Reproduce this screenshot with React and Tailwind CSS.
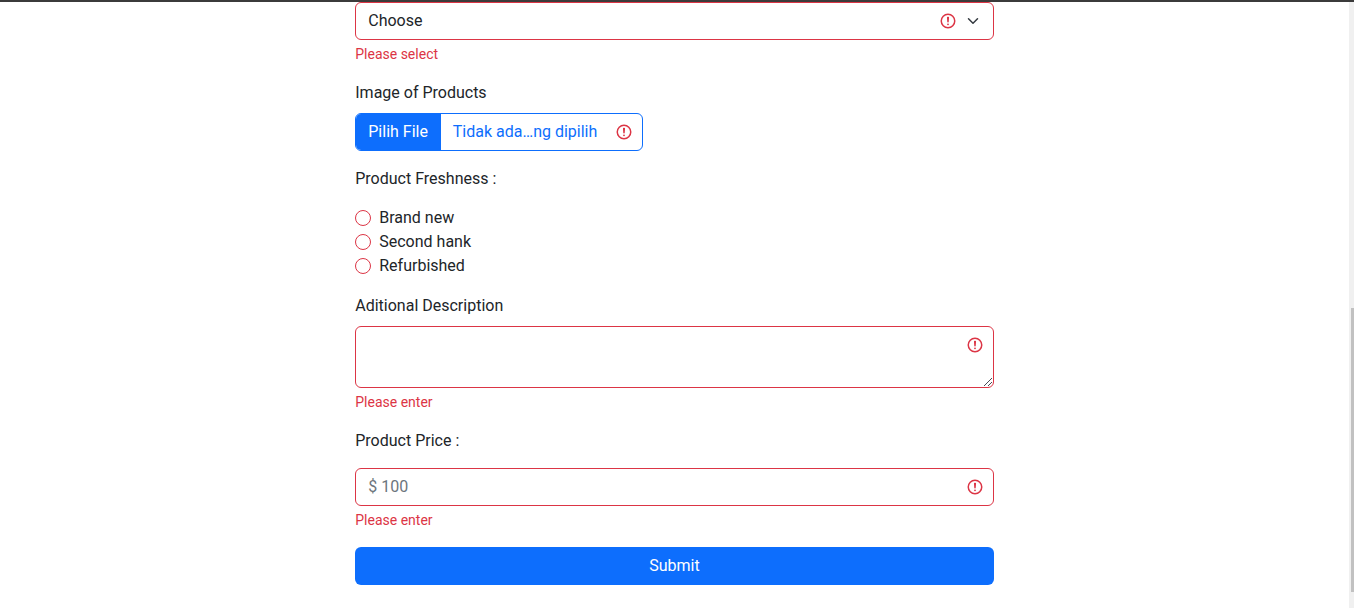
import React from "react";

function AlertIcon({ className = "" }) {
  return (
    <svg viewBox="0 0 12 12" className={`h-[18px] w-[18px] shrink-0 ${className}`} fill="none" stroke="#dc3545">
      <circle cx="6" cy="6" r="4.5" />
      <path strokeLinejoin="round" d="M5.8 3.6h.4L6 6.5z" />
      <circle cx="6" cy="8.2" r=".6" fill="#dc3545" stroke="none" />
    </svg>
  );
}

function Chevron() {
  return (
    <svg viewBox="0 0 16 16" className="h-3 w-4 shrink-0" fill="none" stroke="#343a40" strokeWidth="2" strokeLinecap="round" strokeLinejoin="round">
      <path d="m2 5 6 6 6-6" />
    </svg>
  );
}

function Feedback({ children }) {
  return <p className="mt-1 text-[14px] leading-[21px] text-[#dc3545]">{children}</p>;
}

const conditions = ["Brand new", "Second hank", "Refurbished"];

export default function App() {
  return (
    <div
      className="flex h-[608px] flex-col overflow-hidden bg-white text-[16px] leading-6 text-[#212529]"
      style={{ fontFamily: "Roboto, 'Liberation Sans', sans-serif" }}
    >
      <div className="h-[2px] shrink-0 bg-[#3b3b3b]" />
      <div className="flex min-h-0 flex-1">
        <main className="flex-1">
          <form className="mx-auto w-[638.5px]">
            <div className="flex h-[38px] items-center rounded-md border border-[#dc3545] pr-3 pl-3">
              <span className="flex-1">Choose</span>
              <AlertIcon className="mr-2" />
              <Chevron />
            </div>
            <Feedback>Please select</Feedback>

            <p className="mt-4">Image of Products</p>
            <div className="mt-2 flex h-[38px] w-[288px] items-center overflow-hidden rounded-md border border-[#0d6efd] pr-[9px]">
              <span className="flex h-full w-[84.5px] items-center bg-[#0d6efd] pl-3 text-white">Pilih File</span>
              <span className="flex-1 pl-3 text-[#0d6efd]">Tidak ada…ng dipilih</span>
              <AlertIcon />
            </div>

            <p className="mt-4">Product Freshness :</p>
            <div className="mt-[15px]">
              {conditions.map((name) => (
                <label key={name} className="flex h-6 items-center gap-2">
                  <span className="h-4 w-4 rounded-full border border-[#dc3545]" />
                  <span>{name}</span>
                </label>
              ))}
            </div>

            <p className="mt-4">Aditional Description</p>
            <div className="mt-2 flex h-[62px] flex-col items-end justify-between rounded-md border border-[#dc3545] pt-[9px]">
              <AlertIcon className="mr-[9px]" />
              <svg viewBox="0 0 10 10" className="h-[10px] w-[10px]" fill="none" stroke="#4a4a55" strokeWidth="1">
                <path d="M1 9 9 1M5 9 9 5" />
              </svg>
            </div>
            <Feedback>Please enter</Feedback>

            <p className="mt-4">Product Price :</p>
            <div className="mt-[15px] flex h-[38px] items-center justify-between rounded-md border border-[#dc3545] pr-[9px] pl-3">
              <span className="text-[#6c757d]">$ 100</span>
              <AlertIcon />
            </div>
            <Feedback>Please enter</Feedback>

            <button type="button" className="mt-4 h-[38px] w-full rounded-md bg-[#0d6efd] text-white">
              Submit
            </button>
          </form>
        </main>
        <div className="flex w-[5px] justify-end bg-[#f0f0f0]">
          <div className="mt-[306px] h-[284px] w-[3px] bg-[#c1c1c1]" />
        </div>
      </div>
    </div>
  );
}
